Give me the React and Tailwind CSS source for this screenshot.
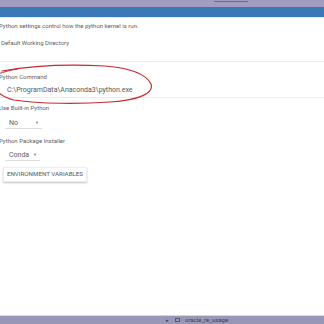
import React from "react";

export default function App() {
  return (
    <div className="relative w-[324px] h-[324px] overflow-hidden bg-white flex flex-col" style={{ fontFamily: "Roboto, 'Liberation Sans', sans-serif" }}>
      {/* top window bar */}
      <div className="h-[7px] bg-[#a19dbf] relative shrink-0">
        <div className="absolute left-[214px] top-[1px] w-[34px] h-[1px] bg-[#6d6b8f]" />
      </div>
      <div className="h-[10px] bg-[#3a78b7] shrink-0" />
      <div className="h-[1px] bg-[#dfe8f2] shrink-0" />

      <div className="flex-1 flex flex-col text-[#606060]">
        <div className="text-[6px] leading-[8px] mt-[4px] ml-[-1px]">Python settings control how the python kernel is run.</div>
        <div className="text-[6px] leading-[8px] mt-[9px] ml-[1px]">Default Working Directory</div>
        <div className="h-[13px]" />
        <div className="h-[1px] bg-[#ebebeb] mt-[1px]" />
        <div className="text-[6px] leading-[8px] mt-[11px] ml-[-1px]">Python Command</div>
        <div className="text-[7px] leading-[8px] mt-[5px] ml-[7px] text-[#585858]">C:\ProgramData\Anaconda3\python.exe</div>
        <div className="h-[1px] bg-[#ebebeb] mt-[3px]" />
        <div className="text-[6px] leading-[8px] mt-[6px] ml-[-1px]">Use Built-in Python</div>
        <div className="ml-[5px] mt-[6px] w-[37px] border-b border-[#dcdcdc] flex items-center justify-between pl-[4px] pr-[3px] h-[11px]">
          <span className="text-[7px] leading-[8px]">No</span>
          <span className="text-[4px] leading-[6px] text-[#777]">▼</span>
        </div>
        <div className="text-[6px] leading-[8px] mt-[8px] ml-[-1px]">Python Package Installer</div>
        <div className="ml-[5px] mt-[5px] w-[35px] border-b border-[#dcdcdc] flex items-center justify-between pl-[4px] pr-[3px] h-[11px]">
          <span className="text-[7px] leading-[8px]">Conda</span>
          <span className="text-[4px] leading-[6px] text-[#777]">▼</span>
        </div>
        <div className="ml-[3px] mt-[6px] w-[84px] h-[15px] flex items-center justify-center bg-white shadow-[0_1px_2px_rgba(0,0,0,0.25)] rounded-[1px] border border-[#eeeeee]">
          <span className="text-[6.2px] leading-[7px] text-[#555]">ENVIRONMENT VARIABLES</span>
        </div>
      </div>

      {/* bottom bar */}
      <div className="h-[1px] bg-[#d8d8d8] shrink-0" />
      <div className="h-[8px] bg-[#9897b7] shrink-0 flex items-center text-[#3e3e55]">
        <span className="ml-[166px] text-[5px] leading-[5px]">▸</span>
        <span className="ml-[6px] w-[5px] h-[4px] border border-[#55556e]" />
        <span className="ml-[5px] text-[6px] leading-[6px]">oracle_re_usage</span>
      </div>

      {/* red hand-drawn ellipse */}
      <svg className="absolute left-0 top-0 pointer-events-none" width="324" height="324" viewBox="0 0 324 324">
        <path
          d="M2 71 C 30 66, 70 64, 105 66 C 130 68, 146 74, 151 84 C 154 93, 140 100, 110 102 C 80 104, 40 104, 14 100 C 6 98, 1 95, -2 92"
          fill="none"
          stroke="#c42b33"
          strokeWidth="1.2"
          strokeLinecap="round"
        />
        <path d="M-2 74 C 4 72, 10 70, 18 69" fill="none" stroke="#c42b33" strokeWidth="1" />
      </svg>
    </div>
  );
}
